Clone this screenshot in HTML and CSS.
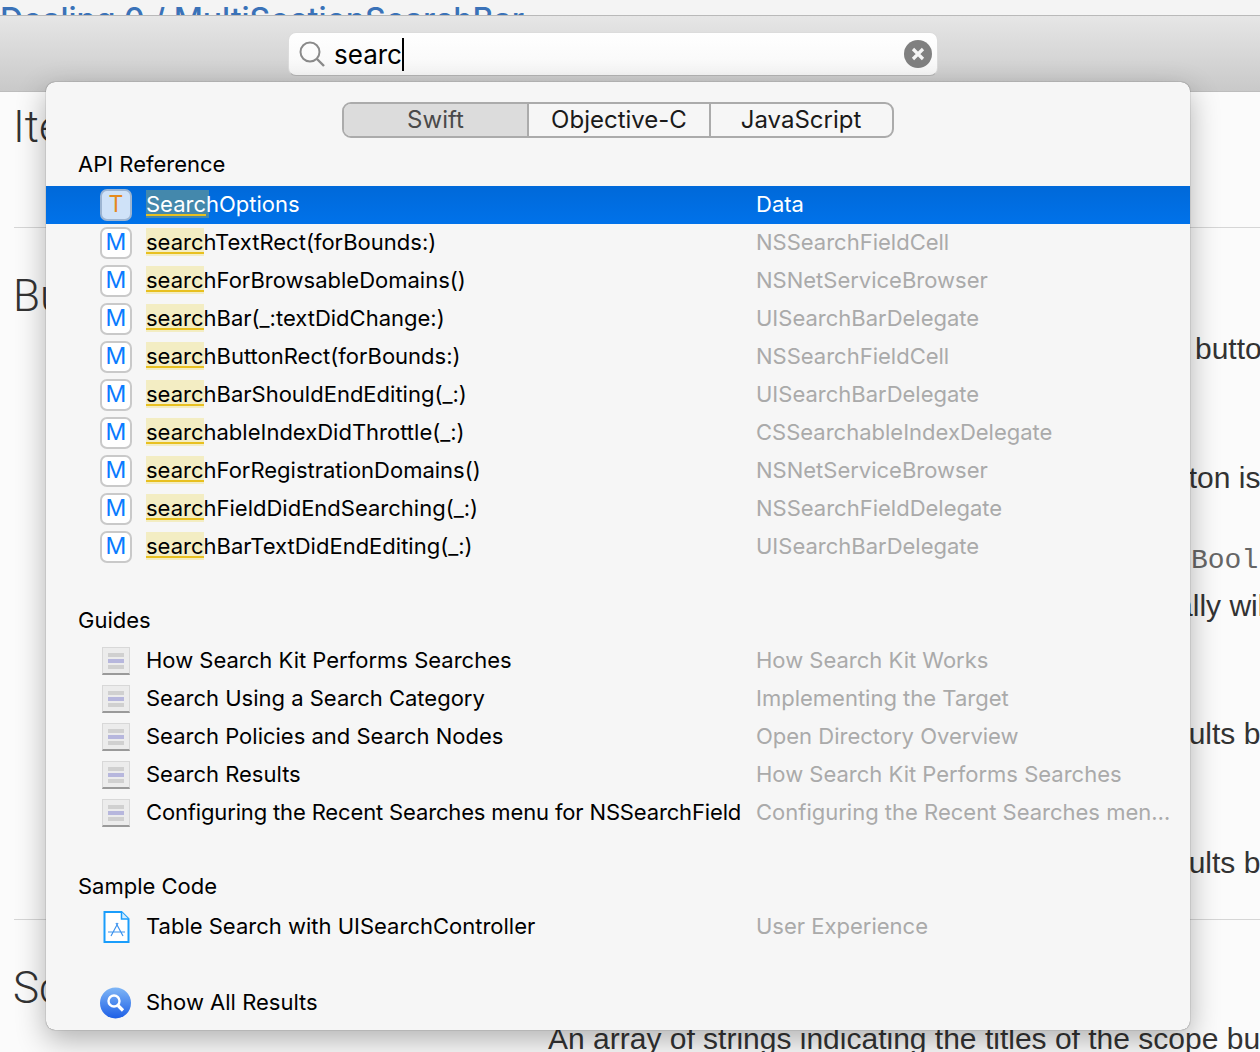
FILE: index.html
```html
<!DOCTYPE html>
<html lang="en">
<head>
    <meta charset="UTF-8">
    <title>Documentation search</title>
    <link rel="stylesheet" href="styles.css">
</head>
<body>

<div class="crumb"><span>Dealing 0 / MultiSectionSearchBar</span></div>

<div class="toolbar">
    <div class="search">
        <svg class="search-glass" width="28" height="28" viewBox="0 0 28 28"><circle cx="12" cy="12" r="9.5" fill="none" stroke="#8a8a8a" stroke-width="2"/><path d="M19 19l7 7" stroke="#8a8a8a" stroke-width="2.4" fill="none"/></svg>
        <span class="search-text">searc</span><span class="caret"></span>
        <svg class="search-clear" width="28" height="28" viewBox="0 0 28 28"><circle cx="14" cy="14" r="14" fill="#808080"/><path d="M9 9l10 10M19 9L9 19" stroke="#f4f4f4" stroke-width="3.2"/></svg>
    </div>
</div>

<div class="doc">
    <div class="doc-line doc-title gap-15">Items</div>
    <hr class="gap-80">
    <div class="doc-line doc-title gap-48">Button</div>
    <div class="doc-line frag-a gap-13">button</div>
    <div class="doc-line frag-b gap-89">button is</div>
    <div class="doc-line frag-c mono gap-42">Bool</div>
    <div class="doc-line frag-d gap-6">automatically will</div>
    <div class="doc-line frag-e gap-88">results b</div>
    <div class="doc-line frag-e gap-89">results b</div>
    <hr class="gap-36">
    <div class="doc-line doc-title gap-48">Scope</div>
    <div class="doc-line frag-f gap-11">An array of strings indicating the titles of the scope buttons</div>
</div>

<div class="popover">
    <div class="tabs">
        <div class="tab active">Swift</div>
        <div class="tab">Objective-C</div>
        <div class="tab">JavaScript</div>
    </div>

    <div class="section-title">API Reference</div>
    <div class="row selected">
        <span class="badge type">T</span>
        <span class="name"><span class="hit">Searc</span>hOptions</span>
        <span class="where">Data</span>
    </div>
    <div class="row"><span class="badge">M</span><span class="name"><span class="hit">searc</span>hTextRect(forBounds:)</span><span class="where">NSSearchFieldCell</span></div>
    <div class="row"><span class="badge">M</span><span class="name"><span class="hit">searc</span>hForBrowsableDomains()</span><span class="where">NSNetServiceBrowser</span></div>
    <div class="row"><span class="badge">M</span><span class="name"><span class="hit">searc</span>hBar(_:textDidChange:)</span><span class="where">UISearchBarDelegate</span></div>
    <div class="row"><span class="badge">M</span><span class="name"><span class="hit">searc</span>hButtonRect(forBounds:)</span><span class="where">NSSearchFieldCell</span></div>
    <div class="row"><span class="badge">M</span><span class="name"><span class="hit">searc</span>hBarShouldEndEditing(_:)</span><span class="where">UISearchBarDelegate</span></div>
    <div class="row"><span class="badge">M</span><span class="name"><span class="hit">searc</span>hableIndexDidThrottle(_:)</span><span class="where">CSSearchableIndexDelegate</span></div>
    <div class="row"><span class="badge">M</span><span class="name"><span class="hit">searc</span>hForRegistrationDomains()</span><span class="where">NSNetServiceBrowser</span></div>
    <div class="row"><span class="badge">M</span><span class="name"><span class="hit">searc</span>hFieldDidEndSearching(_:)</span><span class="where">NSSearchFieldDelegate</span></div>
    <div class="row"><span class="badge">M</span><span class="name"><span class="hit">searc</span>hBarTextDidEndEditing(_:)</span><span class="where">UISearchBarDelegate</span></div>

    <div class="section-title spaced">Guides</div>
    <div class="row"><span class="guide"><i></i><i class="mid"></i><i></i></span><span class="name">How Search Kit Performs Searches</span><span class="where">How Search Kit Works</span></div>
    <div class="row"><span class="guide"><i></i><i class="mid"></i><i></i></span><span class="name">Search Using a Search Category</span><span class="where">Implementing the Target</span></div>
    <div class="row"><span class="guide"><i></i><i class="mid"></i><i></i></span><span class="name">Search Policies and Search Nodes</span><span class="where">Open Directory Overview</span></div>
    <div class="row"><span class="guide"><i></i><i class="mid"></i><i></i></span><span class="name">Search Results</span><span class="where">How Search Kit Performs Searches</span></div>
    <div class="row"><span class="guide"><i></i><i class="mid"></i><i></i></span><span class="name long">Configuring the Recent Searches menu for NSSearchField</span><span class="where">Configuring the Recent Searches men…</span></div>

    <div class="section-title spaced">Sample Code</div>
    <div class="row">
        <span class="row-icon">
            <svg width="28" height="32" viewBox="0 0 28 32"><path d="M3 1h17l7 7v23H3z" fill="#fff" stroke="#1a9dfb" stroke-width="2" transform="translate(-0.5 0)"/><path d="M19.5 1v7h7" fill="#d5ecfd" stroke="#1a9dfb" stroke-width="1.5"/><path d="M16 12L9 25M14 12l7 13M6 21h17" fill="none" stroke="#3d93ee" stroke-width="1.2"/></svg>
        </span>
        <span class="name">Table Search with UISearchController</span>
        <span class="where">User Experience</span>
    </div>

    <div class="row show-all">
        <span class="row-icon">
            <svg width="32" height="32" viewBox="0 0 32 32"><defs><linearGradient id="orb" x1="0" y1="0" x2="0" y2="1"><stop offset="0" stop-color="#7fb6f6"/><stop offset="1" stop-color="#1d5fe6"/></linearGradient></defs><circle cx="15.5" cy="16" r="15.5" fill="url(#orb)"/><circle cx="14" cy="14" r="5.5" fill="none" stroke="#fff" stroke-width="2.4"/><path d="M18 18.5l5 5" stroke="#fff" stroke-width="3.2"/></svg>
        </span>
        <span class="name">Show All Results</span>
    </div>
</div>

</body>
</html>
```

FILE: styles.css
```css
html, body { margin: 0; padding: 0; }
body { width: 1260px; height: 1052px; overflow: hidden; background-color: #fbfbfb; font-family: Inter, "Noto Sans", sans-serif; position: relative; }

.crumb { height: 15px; overflow: hidden; background-color: #f4f4f4; }
.crumb span { display: block; font-size: 32px; line-height: 40px; font-weight: 500; color: #3a72b8; white-space: nowrap; }

.toolbar { height: 77px; box-sizing: border-box; padding: 16px 0 0 288px; border-top: 1px solid #b9b9b9; border-bottom: 1px solid #bdbdbd; background: linear-gradient(#e6e6e6, #c9c9c9); }
.search { width: 650px; height: 44px; box-sizing: border-box; padding: 0 5px 0 9px; display: flex; align-items: center; background: linear-gradient(#ffffff, #f7f7f7); border: 1px solid #dcdcdc; border-bottom-color: #b5b5b5; border-radius: 8px; }
.search-glass { flex: none; margin-right: 8px; }
.search-text { font-size: 26px; color: #000; }
.caret { width: 2px; height: 33px; background-color: #000; }
.search-clear { flex: none; margin-left: auto; }

.doc { color: #333; }
.doc-line { height: 40px; line-height: 40px; font-family: "Liberation Sans", sans-serif; font-size: 30px; white-space: nowrap; }
.doc-title { padding-left: 13px; font-family: Roboto, sans-serif; font-size: 44px; font-weight: 300; color: #333; }
.doc-line.mono { font-family: "Liberation Mono", monospace; font-size: 28px; color: #666; line-height: 42px; }
.doc hr { margin-bottom: 0; margin-left: 14px; margin-right: 0; border: 0; height: 1px; background-color: #d6d6d6; }
.frag-a { padding-left: 1195px; }
.frag-b { padding-left: 1147px; }
.frag-c { padding-left: 1191px; }
.frag-d { padding-left: 1046px; }
.frag-e { padding-left: 1147px; }
.frag-f { padding-left: 548px; }
.gap-6 { margin-top: 6px; }
.gap-11 { margin-top: 11px; }
.gap-13 { margin-top: 13px; }
.gap-15 { margin-top: 15px; }
.gap-36 { margin-top: 36px; }
.gap-42 { margin-top: 42px; }
.gap-48 { margin-top: 48px; }
.gap-80 { margin-top: 80px; }
.gap-88 { margin-top: 88px; }
.gap-89 { margin-top: 89px; }

.popover { position: absolute; left: 46px; top: 82px; width: 1144px; height: 948px; box-sizing: border-box; padding-top: 20px; background-color: #f6f6f6; border-radius: 9px; box-shadow: 0 0 1px rgba(0,0,0,0.7), 0 10px 30px rgba(0,0,0,0.3); color: #000; font-size: 22px; }

.tabs { display: flex; width: 552px; height: 36px; box-sizing: border-box; margin-left: 296px; border: 2px solid #ababab; border-radius: 9px; overflow: hidden; }
.tab { width: 182px; flex: none; box-sizing: border-box; line-height: 32px; text-align: center; font-size: 24px; color: #1a1a1a; border-left: 2px solid #ababab; }
.tab.active { width: 183px; border-left: 0; background-color: #dcdcdc; color: #4a4a4a; }

.section-title { height: 38px; box-sizing: border-box; margin-top: 10px; padding: 0 0 4px 32px; line-height: 32px; }
.section-title.spaced { margin-top: 38px; }

.row { display: flex; align-items: center; height: 38px; padding-left: 54px; white-space: nowrap; }
.row.selected { background: linear-gradient(#0069d9, #0072ea); color: #fff; }
.row.show-all { margin-top: 38px; }

.badge { flex: none; width: 32px; height: 32px; box-sizing: border-box; margin-right: 14px; border: 2px solid #c9c9c9; border-radius: 7px; background-color: #fff; color: #0a7bff; text-align: center; line-height: 26px; font-size: 23px; }
.badge.type { background-color: #cfe2f8; border-color: #9db5d2; color: #e58a1c; }

.guide { flex: none; width: 28px; height: 28px; box-sizing: border-box; margin: 0 16px 0 2px; padding: 5px 5px 0; display: flex; flex-direction: column; gap: 2px; background-color: #ececec; border: 1px solid #d8d8d8; border-bottom: 2px solid #9a9a9a; }
.guide i { display: block; height: 4px; background-color: #d0d0d0; }
.guide i.mid { background-color: #b7b7dd; }

.row-icon { flex: none; width: 32px; height: 32px; margin-right: 14px; display: flex; justify-content: center; }

.name { width: 610px; flex: none; margin-bottom: 2px; }
.name.long { letter-spacing: -0.15px; }
.where { color: #aaaaaa; margin-bottom: 2px; }
.selected .where { color: #fff; }

.hit { display: inline-block; height: 28px; line-height: 28px; background: linear-gradient(#e8c020, #e8c020) 0 24px / 100% 2px no-repeat, #f3edc3; }
.selected .hit { background: linear-gradient(#e8c020, #e8c020) 0 24px / 100% 2px no-repeat, #4488ac; box-shadow: 3px 0 0 #4488ac; }
```
